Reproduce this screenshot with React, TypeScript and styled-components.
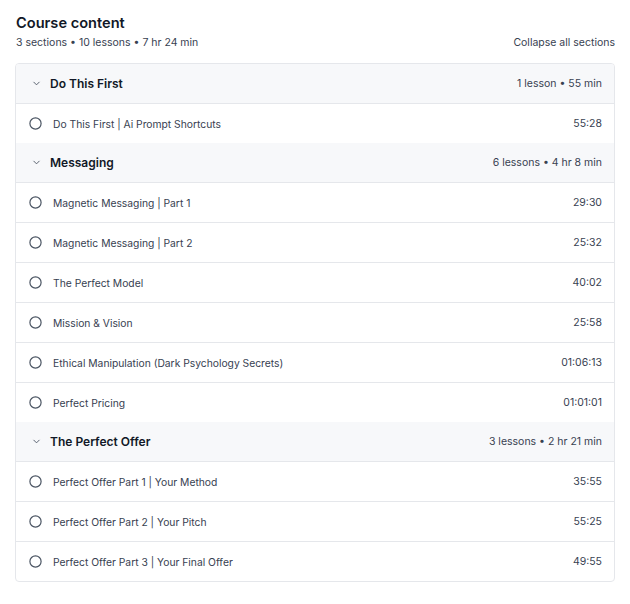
import React from "react";
import styled, { createGlobalStyle } from "styled-components";

const GlobalStyle = createGlobalStyle`
  body {
    margin: 0;
    background: #ffffff;
    font-family: Inter, "Noto Sans", sans-serif;
    color: #111827;
  }
`;

const Page = styled.div`
  padding: 13px 15px 0 15px;
  width: 600px;
`;

const TopBar = styled.div`
  display: flex;
  justify-content: space-between;
  align-items: flex-end;
  margin-bottom: 13px;
`;

const Title = styled.h2`
  margin: 0 0 0 1px;
  font-size: 14.6px;
  font-weight: 600;
  line-height: 20px;
  color: #111827;
`;

const Summary = styled.div`
  margin: 3px 0 0 1px;
  font-size: 10.5px;
  line-height: 14px;
  color: #374151;
`;

const CollapseButton = styled.button`
  border: none;
  background: none;
  padding: 0;
  font-family: inherit;
  font-size: 10.5px;
  line-height: 14px;
  color: #374151;
  cursor: pointer;
`;

const Box = styled.div`
  border: 1px solid #e5e7eb;
  border-radius: 4px;
  overflow: hidden;
`;

const SectionHeader = styled.div`
  display: flex;
  align-items: center;
  height: 39px;
  padding: 0 12px 0 16px;
  background: #f7f8fa;
  border-bottom: 1px solid #e5e7eb;
`;

const SectionTitle = styled.div`
  flex: 1;
  margin-left: 9px;
  font-size: 12px;
  font-weight: 600;
  color: #111827;
`;

const Meta = styled.div`
  font-size: 10.5px;
  color: #374151;
`;

const LessonRow = styled.div<{ $last?: boolean }>`
  display: flex;
  align-items: center;
  height: 39px;
  padding: 0 12px 0 13px;
  border-bottom: ${(p) => (p.$last ? "none" : "1px solid #e5e7eb")};
`;

const LessonTitle = styled.div`
  flex: 1;
  margin-left: 11px;
  font-size: 10.3px;
  color: #374151;
`;

const Chevron = () => (
  <svg width="9" height="9" viewBox="0 0 10 10" fill="none">
    <path d="M2 3.5 L5 6.5 L8 3.5" stroke="#4b5563" strokeWidth="1" strokeLinecap="round" strokeLinejoin="round" />
  </svg>
);

const Circle = () => (
  <svg width="13" height="13" viewBox="0 0 13 13" fill="none">
    <circle cx="6.5" cy="6.5" r="5.6" stroke="#4b5563" strokeWidth="1.2" />
  </svg>
);

const sections = [
  {
    title: "Do This First",
    meta: "1 lesson • 55 min",
    lessons: [["Do This First | Ai Prompt Shortcuts", "55:28"]],
  },
  {
    title: "Messaging",
    meta: "6 lessons • 4 hr 8 min",
    lessons: [
      ["Magnetic Messaging | Part 1", "29:30"],
      ["Magnetic Messaging | Part 2", "25:32"],
      ["The Perfect Model", "40:02"],
      ["Mission & Vision", "25:58"],
      ["Ethical Manipulation (Dark Psychology Secrets)", "01:06:13"],
      ["Perfect Pricing", "01:01:01"],
    ],
  },
  {
    title: "The Perfect Offer",
    meta: "3 lessons • 2 hr 21 min",
    lessons: [
      ["Perfect Offer Part 1 | Your Method", "35:55"],
      ["Perfect Offer Part 2 | Your Pitch", "55:25"],
      ["Perfect Offer Part 3 | Your Final Offer", "49:55"],
    ],
  },
];

const App = () => {
  return (
    <Page>
      <GlobalStyle />
      <TopBar>
        <div>
          <Title>Course content</Title>
          <Summary>3 sections • 10 lessons • 7 hr 24 min</Summary>
        </div>
        <CollapseButton>Collapse all sections</CollapseButton>
      </TopBar>
      <Box>
        {sections.map((s) => (
          <div key={s.title}>
            <SectionHeader>
              <Chevron />
              <SectionTitle>{s.title}</SectionTitle>
              <Meta>{s.meta}</Meta>
            </SectionHeader>
            {s.lessons.map(([name, time], i) => (
              <LessonRow key={name} $last={i === s.lessons.length - 1}>
                <Circle />
                <LessonTitle>{name}</LessonTitle>
                <Meta>{time}</Meta>
              </LessonRow>
            ))}
          </div>
        ))}
      </Box>
    </Page>
  );
};

export default App;
